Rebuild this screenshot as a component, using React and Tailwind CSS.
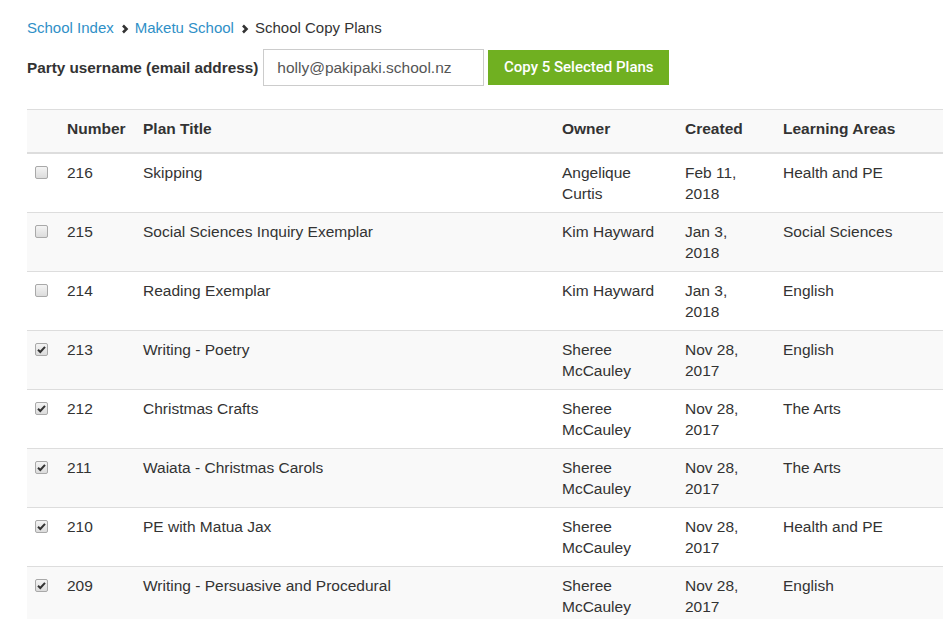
import React from 'react';

const PLANS = [
  { num: 216, title: 'Skipping', owner: 'Angelique Curtis', created: 'Feb 11, 2018', area: 'Health and PE', checked: false },
  { num: 215, title: 'Social Sciences Inquiry Exemplar', owner: 'Kim Hayward', created: 'Jan 3, 2018', area: 'Social Sciences', checked: false },
  { num: 214, title: 'Reading Exemplar', owner: 'Kim Hayward', created: 'Jan 3, 2018', area: 'English', checked: false },
  { num: 213, title: 'Writing - Poetry', owner: 'Sheree McCauley', created: 'Nov 28, 2017', area: 'English', checked: true },
  { num: 212, title: 'Christmas Crafts', owner: 'Sheree McCauley', created: 'Nov 28, 2017', area: 'The Arts', checked: true },
  { num: 211, title: 'Waiata - Christmas Carols', owner: 'Sheree McCauley', created: 'Nov 28, 2017', area: 'The Arts', checked: true },
  { num: 210, title: 'PE with Matua Jax', owner: 'Sheree McCauley', created: 'Nov 28, 2017', area: 'Health and PE', checked: true },
  { num: 209, title: 'Writing - Persuasive and Procedural', owner: 'Sheree McCauley', created: 'Nov 28, 2017', area: 'English', checked: true },
];

const Chevron = () => (
  <svg width="8" height="10" viewBox="0 0 8 10" className="ml-[7px] mr-[6px] mt-[2px]">
    <path d="M2 1.5 L5.5 5 L2 8.5" fill="none" stroke="#333" strokeWidth="2.6" />
  </svg>
);

// old-style grey checkbox
const Check = ({ checked }) => (
  <span className="mt-[4px] block w-[13px] h-[13px] rounded-[2px] border border-[#a9a9a9] bg-gradient-to-b from-[#f4f4f4] to-[#dcdcdc] relative">
    {checked && (
      <svg width="11" height="11" viewBox="0 0 11 11" className="absolute left-0 top-0">
        <path d="M2 5.8 L4.3 8 L9 2.8" fill="none" stroke="#333" strokeWidth="2" />
      </svg>
    )}
  </span>
);

const App = () => {
  return (
    <div className="w-[943px] h-[619px] overflow-hidden bg-white text-[#333] text-[15.5px] leading-[21px] font-['Liberation_Sans',Arial,sans-serif]">
      <div className="pl-[27px] pt-[17px]">
        {/* breadcrumb */}
        <div className="flex items-center h-[21px] text-[15px]">
          <span className="text-[#2f90c7]">School Index</span>
          <Chevron />
          <span className="text-[#2f90c7]">Maketu School</span>
          <Chevron />
          <span>School Copy Plans</span>
        </div>

        {/* form row */}
        <div className="flex items-center mt-[11px] h-[37px]">
          <span className="font-bold text-[15.3px]">Party username (email address)</span>
          <div className="ml-[5px] w-[221px] h-[37px] border border-[#ccc] flex items-center pl-[13px] text-[#555]">
            holly@pakipaki.school.nz
          </div>
          <button className="ml-[4px] w-[181px] h-[35px] bg-[#70b021] text-white text-[15px] font-medium font-['Roboto',sans-serif] flex items-center justify-center">
            Copy 5 Selected Plans
          </button>
        </div>

        {/* plans table */}
        <table className="mt-[23px] w-[1000px] table-fixed border-collapse">
          <colgroup>
            <col className="w-[32px]" />
            <col className="w-[76px]" />
            <col className="w-[419px]" />
            <col className="w-[123px]" />
            <col className="w-[98px]" />
            <col />
          </colgroup>
          <thead>
            <tr className="bg-[#f9f9f9] border-t border-[#ddd] border-b-2">
              <th className="pt-[8px] pb-[13px]"></th>
              <th className="text-left px-[8px] pt-[8px] pb-[13px] font-bold">Number</th>
              <th className="text-left px-[8px] pt-[8px] pb-[13px] font-bold">Plan Title</th>
              <th className="text-left px-[8px] pt-[8px] pb-[13px] font-bold">Owner</th>
              <th className="text-left px-[8px] pt-[8px] pb-[13px] font-bold">Created</th>
              <th className="text-left px-[8px] pt-[8px] pb-[13px] font-bold">Learning Areas</th>
            </tr>
          </thead>
          <tbody>
            {PLANS.map((p, i) => (
              <tr key={p.num} className={`border-b border-[#ddd] align-top ${i % 2 === 1 ? 'bg-[#f9f9f9]' : 'bg-white'}`}>
                <td className="pl-[8px] py-[8px]">
                  <Check checked={p.checked} />
                </td>
                <td className="px-[8px] py-[8px]">{p.num}</td>
                <td className="px-[8px] py-[8px]">{p.title}</td>
                <td className="px-[8px] py-[8px]">{p.owner}</td>
                <td className="pl-[8px] pr-[16px] py-[8px]">{p.created}</td>
                <td className="px-[8px] py-[8px]">{p.area}</td>
              </tr>
            ))}
          </tbody>
        </table>
      </div>
    </div>
  );
};

export default App;
